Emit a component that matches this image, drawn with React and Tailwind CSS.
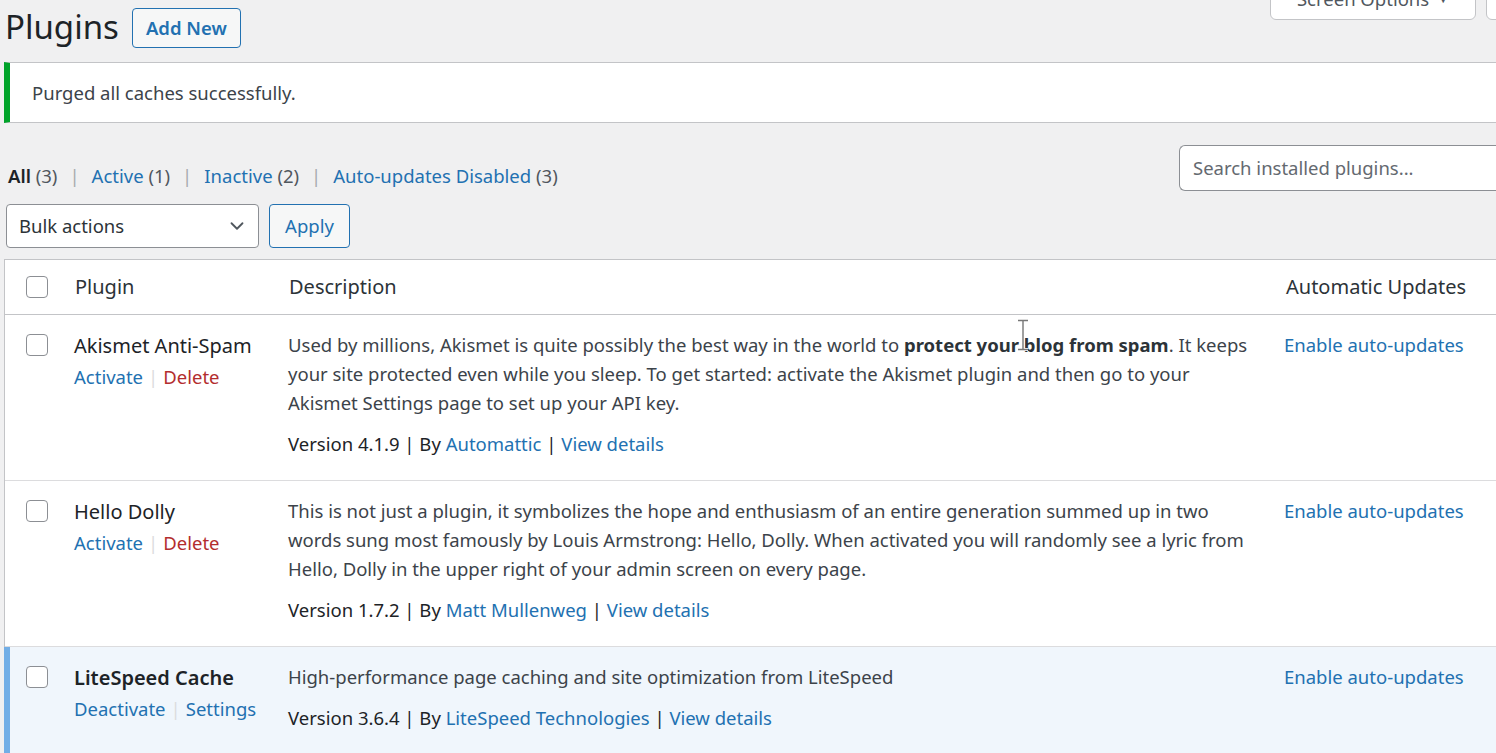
import { ChevronDown } from "lucide-react";

const font = { fontFamily: '"Noto Sans", "Open Sans", sans-serif' };

function Checkbox() {
    return <div className="w-[22px] h-[22px] rounded-[4px] border border-[#8c8f94] bg-white" />;
}

function Sep() {
    return <span className="px-[5px] text-[#dcdcde]">|</span>;
}

const plugins = [
    {
        name: "Akismet Anti-Spam",
        active: false,
        actions: [["Activate", "text-[#2271b1]"], ["Delete", "text-[#b32d2e]"]],
        lines: [
            <>Used by millions, Akismet is quite possibly the best way in the world to <b className="font-bold text-[#2c3338]">protect your blog from spam</b>. It keeps</>,
            "your site protected even while you sleep. To get started: activate the Akismet plugin and then go to your",
            "Akismet Settings page to set up your API key.",
        ],
        version: "4.1.9",
        author: "Automattic",
    },
    {
        name: "Hello Dolly",
        active: false,
        actions: [["Activate", "text-[#2271b1]"], ["Delete", "text-[#b32d2e]"]],
        lines: [
            "This is not just a plugin, it symbolizes the hope and enthusiasm of an entire generation summed up in two",
            "words sung most famously by Louis Armstrong: Hello, Dolly. When activated you will randomly see a lyric from",
            "Hello, Dolly in the upper right of your admin screen on every page.",
        ],
        version: "1.7.2",
        author: "Matt Mullenweg",
    },
    {
        name: "LiteSpeed Cache",
        active: true,
        actions: [["Deactivate", "text-[#2271b1]"], ["Settings", "text-[#2271b1]"]],
        lines: ["High-performance page caching and site optimization from LiteSpeed"],
        version: "3.6.4",
        author: "LiteSpeed Technologies",
    },
];

export default function App() {
    return (
        <div style={font} className="relative w-[1496px] h-[753px] overflow-hidden bg-[#f0f0f1] text-[18.5px] text-[#3c434a]">
            {/* screen options tabs */}
            <div className="absolute top-[-22px] left-[1270px] flex gap-[10px]">
                <div className="w-[206px] h-[42px] bg-white border border-[#c3c4c7] rounded-b-[6px] flex items-center justify-center gap-2 text-[#50575e]">
                    Screen Options <span className="text-[12px]">▼</span>
                </div>
                <div className="w-[120px] h-[42px] bg-white border border-[#c3c4c7] rounded-b-[6px]" />
            </div>

            {/* text cursor */}
            <svg className="absolute z-10 left-[1016px] top-[319px]" width="14" height="32" viewBox="0 0 14 32">
                <path d="M2 1.5h10M7 1.5v29M2 30.5h10" stroke="#fff" strokeWidth="3" fill="none" />
                <path d="M2 1.5h10M7 1.5v29M2 30.5h10" stroke="#777" strokeWidth="1.4" fill="none" />
            </svg>

            <div className="flex items-center gap-[13px] pl-[5px] pt-[8px] h-[48px]">
                <h1 className="text-[33px] text-[#1d2327] leading-none -mt-[4px]">Plugins</h1>
                <button className="h-[40px] px-[13px] border border-[#2271b1] rounded-[4px] bg-[#f6f7f7] text-[#2271b1] font-semibold text-[18.5px]">
                    Add New
                </button>
            </div>

            <div className="ml-[4px] mt-[14px] h-[61px] bg-white border-y border-[#c3c4c7] border-l-[6px] border-l-[#00a32a] flex items-center pl-[22px]">
                Purged all caches successfully.
            </div>

            <div className="flex justify-between items-start mt-[22px] pl-[8px]">
                <div className="mt-[17px] flex items-center leading-[28px]">
                    <span className="text-[#1d2327] font-semibold">All</span>&nbsp;<span className="text-[#50575e]">(3)</span>
                    <span className="px-[12px] text-[#a7aaad]">|</span>
                    <span className="text-[#2271b1]">Active</span>&nbsp;<span className="text-[#50575e]">(1)</span>
                    <span className="px-[12px] text-[#a7aaad]">|</span>
                    <span className="text-[#2271b1]">Inactive</span>&nbsp;<span className="text-[#50575e]">(2)</span>
                    <span className="px-[12px] text-[#a7aaad]">|</span>
                    <span className="text-[#2271b1]">Auto-updates Disabled</span>&nbsp;<span className="text-[#50575e]">(3)</span>
                </div>
                <div className="w-[317px] h-[46px] bg-white border border-[#8c8f94] rounded-l-[6px] border-r-0 flex items-center pl-[13px] text-[#646970]">
                    Search installed plugins...
                </div>
            </div>

            <div className="flex gap-[10px] ml-[6px] mt-[13px]">
                <div className="w-[253px] h-[44px] bg-white border border-[#8c8f94] rounded-[4px] flex items-center justify-between pl-[12px] pr-[10px] text-[#2c3338]">
                    Bulk actions
                    <ChevronDown size={22} strokeWidth={2} className="text-[#50575e]" />
                </div>
                <button className="w-[81px] h-[44px] bg-[#f6f7f7] border border-[#2271b1] rounded-[4px] text-[#2271b1]">
                    Apply
                </button>
            </div>

            {/* table */}
            <div className="ml-[4px] mt-[11px] bg-white border-l border-t border-[#c3c4c7]">
                <div className="grid grid-cols-[55px_214px_996px_1fr] h-[55px] items-center border-b border-[#c3c4c7] text-[#2c3338] text-[20px]">
                    <div className="pl-[21px]"><Checkbox /></div>
                    <div className="pl-[15px]">Plugin</div>
                    <div className="pl-[15px]">Description</div>
                    <div className="pl-[16px] whitespace-nowrap">Automatic Updates</div>
                </div>
                {plugins.map(p => (
                    <div
                        key={p.name}
                        className={`relative grid grid-cols-[55px_214px_996px_1fr] pt-[15px] pb-[22px] border-b border-[#dcdcde] ${p.active ? "bg-[#f0f6fc]" : "bg-white"}`}
                    >
                        {p.active && <div className="absolute left-[-1px] top-0 bottom-0 w-[6px] bg-[#72aee6]" />}
                        <div className="pl-[21px] pt-[4px]"><Checkbox /></div>
                        <div className="pl-[14px]">
                            <div className={`text-[20px] leading-[32px] text-[#1d2327] whitespace-nowrap ${p.active ? "font-semibold" : ""}`}>
                                {p.name}
                            </div>
                            <div className="leading-[29px] whitespace-nowrap">
                                <span className={p.actions[0][1]}>{p.actions[0][0]}</span>
                                <Sep />
                                <span className={p.actions[1][1]}>{p.actions[1][0]}</span>
                            </div>
                        </div>
                        <div className="pl-[14px] leading-[29px] whitespace-nowrap">
                            {p.lines.map((l, i) => <div key={i}>{l}</div>)}
                            <div className="mt-[12px] text-[#1d2327]">
                                Version {p.version} | By <span className="text-[#2271b1]">{p.author}</span> | <span className="text-[#2271b1]">View details</span>
                            </div>
                        </div>
                        <div className="pl-[14px] leading-[29px] text-[#2271b1] whitespace-nowrap">Enable auto-updates</div>
                    </div>
                ))}
            </div>
        </div>
    );
}
